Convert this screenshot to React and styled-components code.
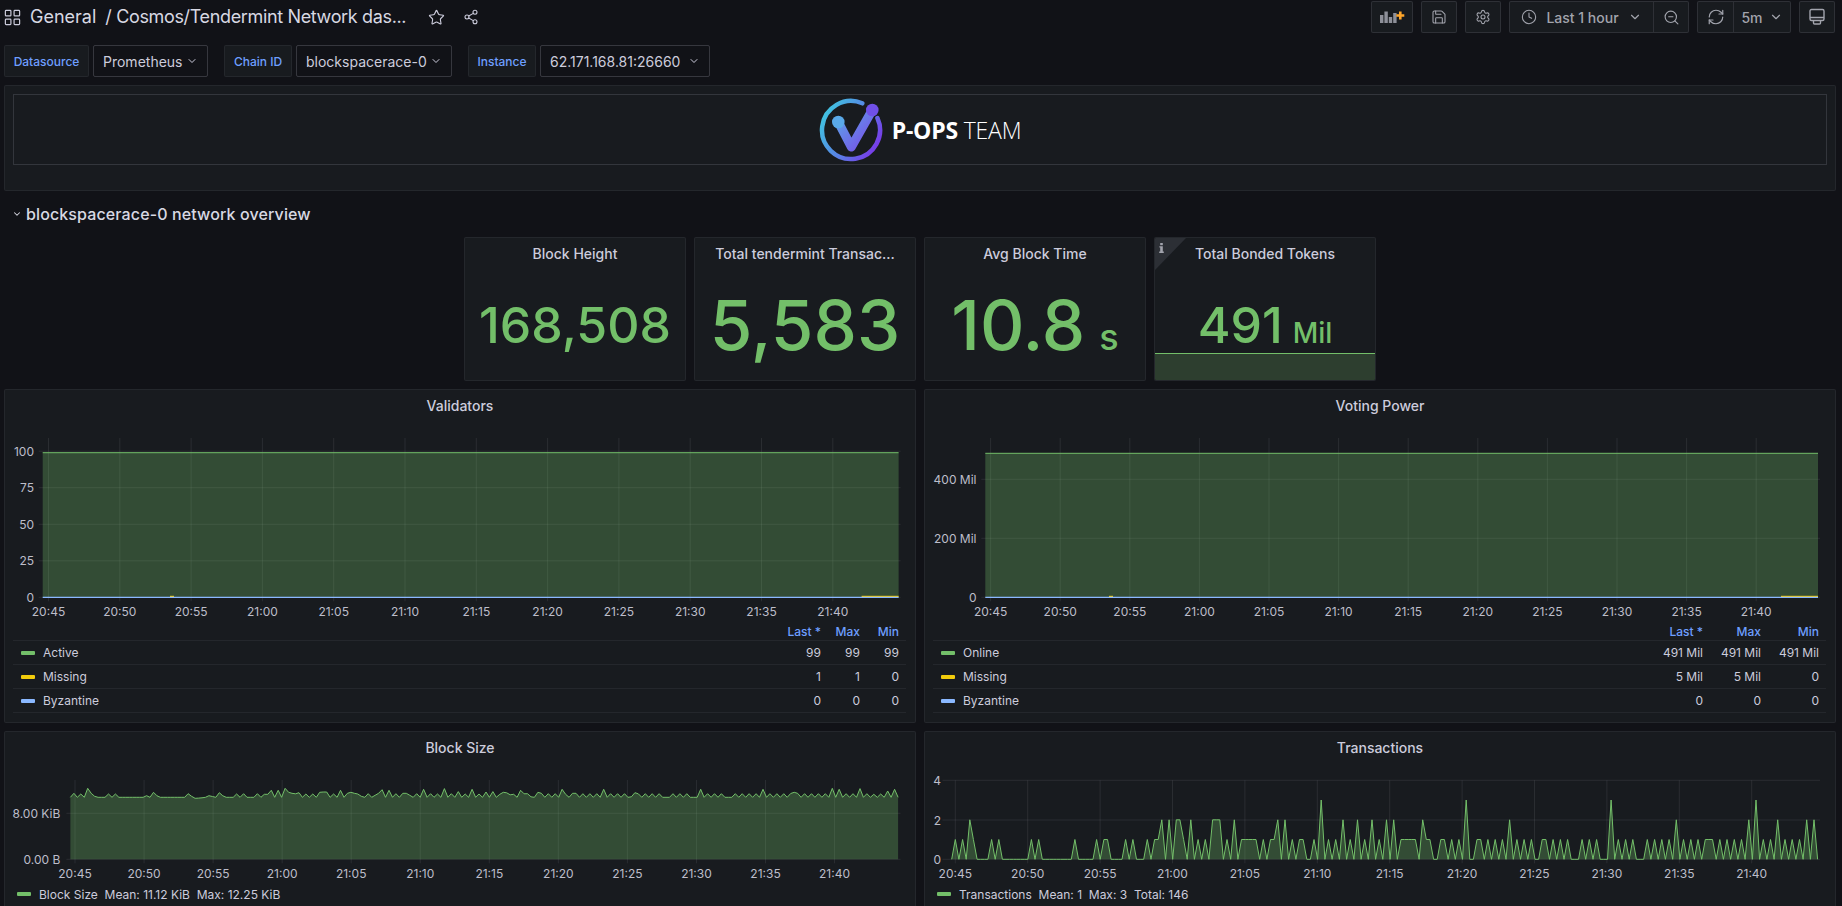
import React from "react";
import styled, { createGlobalStyle } from "styled-components";
import { ChevronDown, Clock, LayoutGrid, RefreshCw, Save, Settings, Share2, Star, ZoomOut } from "lucide-react";

const GREEN = "#73bf69";
const YELLOW = "#f2cc0c";
const BLUE = "#8ab8ff";
const TICKS = ["20:45", "20:50", "20:55", "21:00", "21:05", "21:10", "21:15", "21:20", "21:25", "21:30", "21:35", "21:40"];

const TX_DATA =
  "0101021000" + "0101000000" + "0010100000" + "0000100000" + "1011000010" + "1000101120" +
  "2022102010" + "1022201020" + "1111101011" + "2020101100" + "1030101020" + "1020102010" +
  "2020111110" + "2110011010" + "1030011010" + "1010201010" + "1001101010" + "1000101010" +
  "0030101010" + "0010101010" + "2010101011" + "1010101010" + "2030101020" + "1010102020";

const BLOCK_PEAKS = [
  [1, 4], [3, 3.3], [5, 9], [6, 4], [7, 1], [11, 3.3], [13, 3.3], [22, 1.6], [24, 5], [25, 1.5], [34, 3.6], [35, 1],
  [36, -1], [37, -0.8], [38, -0.5], [40, 1.6], [41, 0.8], [43, 4.6], [44, 1.5], [48, 3.3], [50, 3.6], [54, 3.6], [56, 3],
  [57, 3], [58, 7], [60, 7], [62, 9], [63, 5], [64, 4], [65, 3.5], [66, 4.6], [68, 3.3], [70, 3.3], [72, 5], [73, 5.3],
  [74, 5.3], [76, 3.3], [78, 7], [80, 4], [81, 5], [82, 4], [83, 3.3], [84, 1], [86, 3.6], [88, 2], [89, 4], [90, 7.6],
  [92, 7], [94, 3.6], [96, 4], [97, 4], [98, 2], [100, 3.6], [102, 8], [104, 3.6], [106, 3.3], [108, 8.7], [110, 3.6],
  [112, 5.7], [114, 3.3], [116, 8], [118, 3.3], [120, 5.3], [122, 5.7], [124, 3], [125, 5], [126, 4.5], [127, 2.5],
  [128, 3], [130, 7], [131, 3.5], [132, 3.6], [133, 0.5], [135, 5], [136, 4], [138, 3.6], [140, 3.6], [142, 8], [143, 3],
  [145, 4], [146, 4], [148, 3.6], [150, 3.6], [152, 3.6], [154, 8], [156, 3.6], [158, 3.6], [160, 3.6], [162, 0.5],
  [163, 4.6], [164, 3.5], [166, 3.6], [168, 3.6], [170, 3.6], [174, 3.6], [176, 3.6], [178, 3.6], [182, 8], [184, 3.6],
  [186, 3.6], [188, 3.6], [192, 3.6], [194, 3.6], [196, 3.6], [198, 3.6], [200, 8], [202, 3.6], [204, 3.6], [206, 3.6],
  [208, 3.8], [209, 5], [210, 4], [212, 3.6], [214, 3.6], [216, 3.6], [218, 3.6], [220, 9], [222, 8], [224, 3.6],
  [226, 3.6], [228, 8.7], [230, 3.6], [232, 3], [234, 3.3], [236, 6.3], [238, 8],
];

const GlobalStyle = createGlobalStyle`
  html, body {
    margin: 0;
    height: 906px;
    overflow: hidden;
    background: #111217;
  }
  * {
    box-sizing: border-box;
  }
`;

const Page = styled.div`
  width: 1842px;
  height: 906px;
  overflow: hidden;
  padding: 1px 6px 0 4px;
  background: #111217;
  color: #ccccdc;
  font-family: Inter, "Liberation Sans", sans-serif;
  font-size: 14px;
`;

const NavBar = styled.div`
  display: flex;
  align-items: center;
  justify-content: space-between;
  height: 32px;
  padding: 0 1px;
`;

const NavLeft = styled.div`
  display: flex;
  align-items: center;
  color: #d8d9e3;
  font-size: 18px;
  line-height: 24px;
  white-space: nowrap;
  svg {
    color: #ccccdc;
    flex: none;
  }
`;

const AppsIcon = styled(LayoutGrid)`
  margin-left: -2px;
`;

const FolderName = styled.span`
  margin-left: 8px;
`;

const DashTitle = styled.span`
  margin-left: 9px;
  width: 302px;
  letter-spacing: -0.35px;
`;

const NavIcon = styled.span`
  display: flex;
  margin-left: ${(p) => p.$gap}px;
`;

const NavRight = styled.div`
  display: flex;
  gap: 8px;
`;

const ToolGroup = styled.div`
  display: flex;
  height: 32px;
  background: #181b1f;
  border: 1px solid rgba(204, 204, 220, 0.12);
  border-radius: 2px;
  color: #a2a4ad;
  font-weight: 500;
`;

const ToolButton = styled.div`
  display: flex;
  align-items: center;
  justify-content: center;
  gap: ${(p) => p.$gap || 0}px;
  width: ${(p) => p.$w}px;
  & + & {
    border-left: 1px solid rgba(204, 204, 220, 0.12);
  }
`;

const VarRow = styled.div`
  display: flex;
  height: 32px;
  margin-top: 12px;
`;

const VarGroup = styled.div`
  display: flex;
  gap: 4px;
  margin-right: 16px;
`;

const VarLabel = styled.div`
  display: flex;
  align-items: center;
  justify-content: center;
  width: ${(p) => p.$w}px;
  background: #181b1f;
  border: 1px solid rgba(204, 204, 220, 0.07);
  border-radius: 2px;
  color: #6e9fff;
  font-size: 12px;
  font-weight: 500;
`;

const VarValue = styled.div`
  display: flex;
  align-items: center;
  justify-content: space-between;
  width: ${(p) => p.$w}px;
  padding: 0 9px 0 9px;
  border: 1px solid rgba(204, 204, 220, 0.2);
  border-radius: 2px;
  color: #ccccdc;
  white-space: nowrap;
`;

const Grid = styled.div`
  display: grid;
  grid-template-columns: repeat(24, 1fr);
  grid-auto-rows: 30px;
  gap: 8px;
  width: 1832px;
  margin-top: 8px;
`;

const Panel = styled.section`
  position: relative;
  display: flex;
  flex-direction: column;
  grid-column: ${(p) => (p.$start ? `${p.$start} / span ${p.$cols}` : `span ${p.$cols}`)};
  grid-row: span ${(p) => p.$rows};
  min-width: 0;
  overflow: hidden;
  background: #181b1f;
  border: 1px solid rgba(204, 204, 220, 0.07);
  border-radius: 2px;
`;

const LogoPanel = styled(Panel)`
  padding: 8px 8px 25px;
`;

const LogoFrame = styled.div`
  display: flex;
  align-items: center;
  justify-content: center;
  gap: 9px;
  flex: 1;
  border: 1px solid #33363c;
`;

const LogoText = styled.div`
  color: #fff;
  font-family: "Open Sans", sans-serif;
  font-size: 23px;
  font-weight: 300;
  letter-spacing: -0.2px;
  b {
    font-weight: 700;
  }
`;

const RowTitle = styled.div`
  grid-column: 1 / -1;
  display: flex;
  align-items: center;
  gap: 4px;
  padding-left: 8px;
  color: #d8d9e3;
  font-size: 16px;
  font-weight: 500;
  letter-spacing: 0.12px;
`;

const PanelHeader = styled.header`
  flex: none;
  height: 34px;
  line-height: 32px;
  padding: 0 16px;
  overflow: hidden;
  color: #ccccdc;
  font-size: 14px;
  font-weight: 500;
  text-align: center;
  white-space: nowrap;
`;

const StatValue = styled.div`
  position: relative;
  z-index: 1;
  flex: 1;
  display: flex;
  align-items: center;
  justify-content: center;
  padding-bottom: 2px;
`;

const StatLine = styled.div`
  display: flex;
  align-items: baseline;
  gap: ${(p) => p.$gap || 0}px;
  color: ${GREEN};
  font-size: ${(p) => p.$size}px;
  font-weight: 500;
  line-height: 1;
  white-space: nowrap;
`;

const StatUnit = styled.span`
  font-size: ${(p) => p.$size}px;
`;

const Sparkline = styled.div`
  position: absolute;
  left: 0;
  right: 0;
  bottom: 0;
  height: 27px;
  background: #2d3e2f;
  border-top: 1px solid ${GREEN};
`;

const InfoCorner = styled.div`
  position: absolute;
  top: 0;
  left: 0;
  width: 0;
  height: 0;
  border-top: 32px solid #2c2f35;
  border-right: 31px solid transparent;
`;

const InfoGlyph = styled.svg`
  position: absolute;
  top: 5px;
  left: 4px;
`;

const ChartSvg = styled.svg`
  display: block;
  flex: none;
`;

const TickText = styled.text`
  fill: #bdbeca;
  font-family: Inter, "Liberation Sans", sans-serif;
  font-size: 12px;
  text-anchor: ${(p) => p.$anchor};
`;

const Legend = styled.div`
  flex: none;
  padding: 0 9px 0 8px;
  font-size: 12px;
`;

const LegendHead = styled.div`
  display: grid;
  grid-template-columns: 1fr repeat(3, ${(p) => p.$col}px);
  align-items: center;
  height: 19px;
  padding-right: 7px;
  color: #6e9fff;
  font-weight: 500;
  text-align: right;
  border-bottom: 1px solid rgba(204, 204, 220, 0.07);
`;

const LegendRow = styled(LegendHead)`
  height: 24px;
  color: #ccccdc;
  font-weight: 400;
`;

const SeriesName = styled.div`
  display: flex;
  align-items: center;
  gap: 8px;
  padding-left: 8px;
`;

const Swatch = styled.span`
  flex: none;
  width: 14px;
  height: 4px;
  border-radius: 1px;
  background: ${(p) => p.$color};
`;

const FootLegend = styled.div`
  display: flex;
  align-items: center;
  gap: 8px;
  height: 20px;
  padding-left: 12px;
  font-size: 12px;
  white-space: pre;
`;

function gridXs(start, step) {
  return TICKS.map((_, i) => start + step * i);
}

// everything inside is written in page coordinates, origin shifts it into the panel
function Chart({ origin, height, plot, xStart, xStep, labelRight, yTicks, children }) {
  const xs = gridXs(xStart, xStep);
  return (
    <ChartSvg width={910} height={height}>
      <g transform={`translate(${-origin[0]} ${-origin[1]})`}>
        {xs.map((x) => (
          <line key={x} x1={x} x2={x} y1={plot.top} y2={plot.bottom + 4} stroke="rgba(204,204,220,0.1)" />
        ))}
        {yTicks.map((t) => (
          <line key={t.label} x1={plot.left - 4} x2={plot.right + 2} y1={t.y} y2={t.y} stroke="rgba(204,204,220,0.1)" />
        ))}
        {children}
        {xs.map((x, i) => (
          <TickText key={x} x={x} y={plot.bottom + 19} $anchor="middle">
            {TICKS[i]}
          </TickText>
        ))}
        {yTicks.map((t) => (
          <TickText key={t.label} x={labelRight} y={t.y + 4.5} $anchor="end">
            {t.label}
          </TickText>
        ))}
      </g>
    </ChartSvg>
  );
}

function FlatSeries({ left, right, top, bottom, bump }) {
  return (
    <>
      <rect x={left} y={top} width={right - left} height={bottom - top} fill={GREEN} fillOpacity="0.3" />
      <line x1={left} x2={right} y1={top} y2={top} stroke={GREEN} />
      <rect x={bump} y={bottom - 1.5} width={4} height={1.5} fill={YELLOW} />
      <rect x={right - 37} y={bottom - 1.5} width={37} height={1.5} fill={YELLOW} />
      <line x1={left} x2={right} y1={bottom} y2={bottom} stroke={BLUE} strokeWidth="1.2" />
    </>
  );
}

function AreaSeries({ points, base }) {
  const line = points.map((p) => p.join(",")).join(" ");
  const first = points[0][0];
  const last = points[points.length - 1][0];
  return (
    <>
      <polygon points={`${first},${base} ${line} ${last},${base}`} fill={GREEN} fillOpacity="0.3" />
      <polyline points={line} fill="none" stroke={GREEN} strokeWidth="1" strokeLinejoin="round" />
    </>
  );
}

function blockPoints() {
  const peaks = Object.fromEntries(BLOCK_PEAKS);
  return Array.from({ length: 240 }, (_, i) => [+(70.4 + 3.463 * i).toFixed(1), +(797.3 - (peaks[i] || 0)).toFixed(1)]);
}

function txPoints() {
  return TX_DATA.split("").map((d, i) => [+(951.7 + 3.623 * i).toFixed(1), +(859.3 - 19.75 * Number(d)).toFixed(1)]);
}

function SeriesLegend({ col, rows }) {
  return (
    <Legend>
      <LegendHead $col={col}>
        <span />
        <span>Last *</span>
        <span>Max</span>
        <span>Min</span>
      </LegendHead>
      {rows.map((r) => (
        <LegendRow key={r.name} $col={col}>
          <SeriesName>
            <Swatch $color={r.color} />
            {r.name}
          </SeriesName>
          {r.values.map((v, i) => (
            <span key={i}>{v}</span>
          ))}
        </LegendRow>
      ))}
    </Legend>
  );
}

function AddPanelIcon() {
  return (
    <svg width="25" height="12" viewBox="0 0 25 12">
      <g fill="#8e9099">
        <rect x="0" y="4" width="3.4" height="8" />
        <rect x="4.4" y="0.5" width="3.4" height="11.5" />
        <rect x="8.8" y="6" width="3.4" height="6" />
        <rect x="13.2" y="2" width="3.4" height="10" />
      </g>
      <path d="M20.3 0.5v8M16.3 4.5h8" stroke="#ffa62b" strokeWidth="2.6" fill="none" />
    </svg>
  );
}

function MonitorIcon() {
  return (
    <svg width="18" height="18" viewBox="0 0 18 18" fill="none" stroke="currentColor" strokeWidth="1.4">
      <rect x="2" y="1.5" width="14" height="11" rx="1.5" />
      <path d="M2 9.5h14M5.5 12.5v2.5a1 1 0 0 0 1 1h5a1 1 0 0 0 1-1v-2.5" />
    </svg>
  );
}

function PopsLogo() {
  return (
    <svg width="64" height="64" viewBox="0 0 64 64" fill="none">
      <defs>
        <linearGradient id="ring" x1="0" y1="0.2" x2="1" y2="0.8">
          <stop offset="0" stopColor="#3fc6e0" />
          <stop offset="0.55" stopColor="#5a7fe6" />
          <stop offset="1" stopColor="#7a35e8" />
        </linearGradient>
        <linearGradient id="vee" x1="0" y1="0" x2="1" y2="1">
          <stop offset="0" stopColor="#5aa9e8" />
          <stop offset="1" stopColor="#7a4be8" />
        </linearGradient>
      </defs>
      <path d="M43.3 5.3A29 29 0 1 0 58.4 20" stroke="url(#ring)" strokeWidth="4.5" strokeLinecap="round" />
      <path d="M19.3 24L32.3 49L53.3 12" stroke="url(#vee)" strokeWidth="9" strokeLinecap="round" strokeLinejoin="round" />
      <circle cx="19.3" cy="24" r="6.3" fill="#5aa9e8" />
      <circle cx="53.3" cy="12" r="6.3" fill="#7050e8" />
    </svg>
  );
}

function App() {
  return (
    <Page>
      <GlobalStyle />
      <NavBar>
        <NavLeft>
          <AppsIcon size={19} strokeWidth={1.5} />
          <FolderName>General</FolderName>
          <DashTitle>/ Cosmos/Tendermint Network das...</DashTitle>
          <NavIcon $gap={21}>
            <Star size={17} strokeWidth={1.6} />
          </NavIcon>
          <NavIcon $gap={18}>
            <Share2 size={16} strokeWidth={1.6} />
          </NavIcon>
        </NavLeft>
        <NavRight>
          <ToolGroup>
            <ToolButton $w={40}>
              <AddPanelIcon />
            </ToolButton>
          </ToolGroup>
          <ToolGroup>
            <ToolButton $w={34}>
              <Save size={16} strokeWidth={1.6} />
            </ToolButton>
          </ToolGroup>
          <ToolGroup>
            <ToolButton $w={34}>
              <Settings size={16} strokeWidth={1.6} />
            </ToolButton>
          </ToolGroup>
          <ToolGroup>
            <ToolButton $w={143} $gap={9}>
              <Clock size={16} strokeWidth={1.6} />
              <span>Last 1 hour</span>
              <ChevronDown size={14} />
            </ToolButton>
            <ToolButton $w={35}>
              <ZoomOut size={17} strokeWidth={1.6} />
            </ToolButton>
          </ToolGroup>
          <ToolGroup>
            <ToolButton $w={35}>
              <RefreshCw size={18} strokeWidth={1.6} />
            </ToolButton>
            <ToolButton $w={57} $gap={6}>
              <span>5m</span>
              <ChevronDown size={14} />
            </ToolButton>
          </ToolGroup>
          <ToolGroup>
            <ToolButton $w={34}>
              <MonitorIcon />
            </ToolButton>
          </ToolGroup>
        </NavRight>
      </NavBar>

      <VarRow>
        <VarGroup>
          <VarLabel $w={85}>Datasource</VarLabel>
          <VarValue $w={115}>
            Prometheus
            <ChevronDown size={12} />
          </VarValue>
        </VarGroup>
        <VarGroup>
          <VarLabel $w={68}>Chain ID</VarLabel>
          <VarValue $w={156}>
            blockspacerace-0
            <ChevronDown size={12} />
          </VarValue>
        </VarGroup>
        <VarGroup>
          <VarLabel $w={68}>Instance</VarLabel>
          <VarValue $w={170}>
            62.171.168.81:26660
            <ChevronDown size={12} />
          </VarValue>
        </VarGroup>
      </VarRow>

      <Grid>
        <LogoPanel $cols={24} $rows={3}>
          <LogoFrame>
            <PopsLogo />
            <LogoText>
              <b>P-OPS</b> TEAM
            </LogoText>
          </LogoFrame>
        </LogoPanel>

        <RowTitle>
          <ChevronDown size={10} strokeWidth={2.5} />
          blockspacerace-0 network overview
        </RowTitle>

        <Panel $start={7} $cols={3} $rows={4}>
          <PanelHeader>Block Height</PanelHeader>
          <StatValue>
            <StatLine $size={50}>168,508</StatLine>
          </StatValue>
        </Panel>
        <Panel $cols={3} $rows={4}>
          <PanelHeader>Total tendermint Transac...</PanelHeader>
          <StatValue>
            <StatLine $size={69}>5,583</StatLine>
          </StatValue>
        </Panel>
        <Panel $cols={3} $rows={4}>
          <PanelHeader>Avg Block Time</PanelHeader>
          <StatValue>
            <StatLine $size={69} $gap={14}>
              10.8
              <StatUnit $size={36}>s</StatUnit>
            </StatLine>
          </StatValue>
        </Panel>
        <Panel $cols={3} $rows={4}>
          <InfoCorner />
          <InfoGlyph width="5" height="10" viewBox="0 0 5 10" fill="#a2a4ad">
            <rect x="1.2" y="0" width="2.6" height="2.2" />
            <path d="M0.4 3.2h3.4v5.4h1V10H0.2V8.6h1V4.5H0.4z" />
          </InfoGlyph>
          <PanelHeader>Total Bonded Tokens</PanelHeader>
          <StatValue>
            <StatLine $size={50} $gap={10}>
              491
              <StatUnit $size={28}>Mil</StatUnit>
            </StatLine>
          </StatValue>
          <Sparkline />
        </Panel>

        <Panel $cols={12} $rows={9}>
          <PanelHeader>Validators</PanelHeader>
          <Chart
            origin={[5, 424]}
            height={198}
            plot={{ left: 42.7, right: 898.6, top: 438, bottom: 597.3 }}
            xStart={48.5}
            xStep={71.3}
            labelRight={34}
            yTicks={[
              { label: "100", y: 451.2 },
              { label: "75", y: 487.7 },
              { label: "50", y: 524.3 },
              { label: "25", y: 560.8 },
              { label: "0", y: 597.3 },
            ]}
          >
            <FlatSeries left={42.7} right={898.6} top={452.7} bottom={597.3} bump={170} />
          </Chart>
          <SeriesLegend
            col={39}
            rows={[
              { name: "Active", color: GREEN, values: ["99", "99", "99"] },
              { name: "Missing", color: YELLOW, values: ["1", "1", "0"] },
              { name: "Byzantine", color: BLUE, values: ["0", "0", "0"] },
            ]}
          />
        </Panel>

        <Panel $cols={12} $rows={9}>
          <PanelHeader>Voting Power</PanelHeader>
          <Chart
            origin={[925, 424]}
            height={198}
            plot={{ left: 985.3, right: 1818, top: 438, bottom: 597.3 }}
            xStart={990.6}
            xStep={69.6}
            labelRight={976.5}
            yTicks={[
              { label: "400 Mil", y: 479.3 },
              { label: "200 Mil", y: 538.3 },
              { label: "0", y: 597.3 },
            ]}
          >
            <FlatSeries left={985.3} right={1818} top={453.3} bottom={597.3} bump={1109} />
          </Chart>
          <SeriesLegend
            col={58}
            rows={[
              { name: "Online", color: GREEN, values: ["491 Mil", "491 Mil", "491 Mil"] },
              { name: "Missing", color: YELLOW, values: ["5 Mil", "5 Mil", "0"] },
              { name: "Byzantine", color: BLUE, values: ["0", "0", "0"] },
            ]}
          />
        </Panel>

        <Panel $cols={12} $rows={5}>
          <PanelHeader>Block Size</PanelHeader>
          <Chart
            origin={[5, 766]}
            height={118}
            plot={{ left: 70.4, right: 898.5, top: 780, bottom: 859.3 }}
            xStart={75}
            xStep={69.05}
            labelRight={60.4}
            yTicks={[
              { label: "8.00 KiB", y: 813.3 },
              { label: "0.00 B", y: 859.3 },
            ]}
          >
            <AreaSeries points={blockPoints()} base={859.3} />
          </Chart>
          <FootLegend>
            <Swatch $color={GREEN} />
            {"Block Size  Mean: 11.12 KiB  Max: 12.25 KiB"}
          </FootLegend>
        </Panel>

        <Panel $cols={12} $rows={5}>
          <PanelHeader>Transactions</PanelHeader>
          <Chart
            origin={[925, 766]}
            height={118}
            plot={{ left: 946.5, right: 1818, top: 780.3, bottom: 859.3 }}
            xStart={955.3}
            xStep={72.4}
            labelRight={941}
            yTicks={[
              { label: "4", y: 780.3 },
              { label: "2", y: 820 },
              { label: "0", y: 859.3 },
            ]}
          >
            <AreaSeries points={txPoints()} base={859.3} />
          </Chart>
          <FootLegend>
            <Swatch $color={GREEN} />
            {"Transactions  Mean: 1  Max: 3  Total: 146"}
          </FootLegend>
        </Panel>
      </Grid>
    </Page>
  );
}

export default App;
